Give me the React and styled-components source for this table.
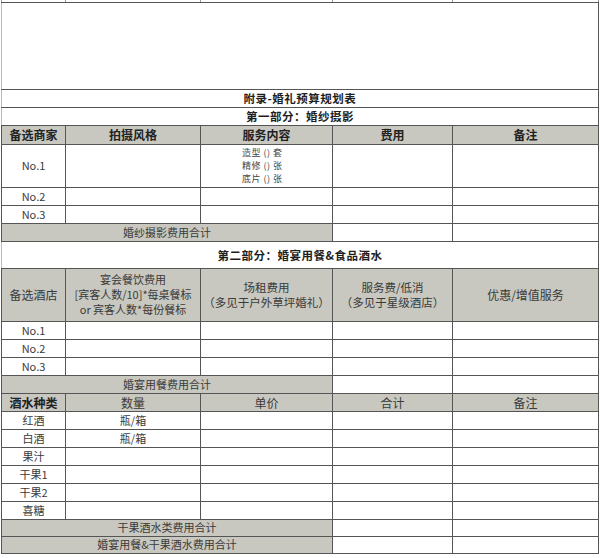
import styled, { createGlobalStyle } from "styled-components";

const GlobalStyle = createGlobalStyle`
  html, body {
    margin: 0;
    padding: 0;
    background: #fff;
  }
  body {
    font-family: "Noto Sans CJK SC", "Noto Sans", sans-serif;
    color: #333;
  }
`;

const Page = styled.div`
  width: 600px;
  height: 558px;
  overflow: hidden;
  background: #fff;
`;

const Sheet = styled.table`
  margin-left: 1px;
  width: 597px;
  border-collapse: collapse;
  table-layout: fixed;
  font-size: 11px;
`;

const Row = styled.tr`
  height: ${(p) => p.h}px;
`;

const Cell = styled.td`
  border: 1px solid #555;
  padding: 0;
  text-align: center;
  vertical-align: middle;
  line-height: 15px;
  background: ${(p) => (p.gray ? "#c8c8c0" : "#fff")};
  font-weight: ${(p) => (p.bold ? 700 : 400)};
  color: ${(p) => (p.bold ? "#222" : "#3a3a3a")};
  font-size: ${(p) => p.size || 11}px;
  white-space: nowrap;
`;

const Blank = styled.td`
  border-left: 1px solid #bbb;
  border-right: 1px solid #555;
  border-top: 1px solid #555;
  border-bottom: 1px solid #555;
  padding: 0;
`;

const Stub = styled.td`
  border-left: 1px solid #999;
  border-right: 1px solid #999;
  border-bottom: 1px solid #555;
  padding: 0;
`;

const Heading = styled.td`
  border: 1px solid #555;
  border-left-color: #bbb;
  padding: 0;
  text-align: center;
  font-weight: 700;
  font-size: 11.5px;
  color: #1e1e1e;
  letter-spacing: 0.5px;
`;

const ItemList = styled.div`
  display: flex;
  flex-direction: column;
  align-items: flex-start;
  padding-left: 41px;
  font-size: 9px;
  line-height: 13px;
  color: #444;
  letter-spacing: 0.5px;
`;

const cols = [64, 135, 132, 120, 146];

const photoRows = ["No.2", "No.3"];
const hotelRows = ["No.1", "No.2", "No.3"];
const drinks = [
  { name: "红酒", qty: "瓶/箱" },
  { name: "白酒", qty: "瓶/箱" },
  { name: "果汁", qty: "" },
  { name: "干果1", qty: "" },
  { name: "干果2", qty: "" },
  { name: "喜糖", qty: "" },
];

const TotalRow = ({ label, h = 18 }) => (
  <Row h={h}>
    <Cell gray colSpan={3}>{label}</Cell>
    <Cell />
    <Cell />
  </Row>
);

const App = () => {
  return (
    <Page>
      <GlobalStyle />
      <Sheet>
        <colgroup>
          {cols.map((w, i) => (
            <col key={i} style={{ width: w }} />
          ))}
        </colgroup>
        <tbody>
          <Row h={2}>
            {cols.map((_, i) => (
              <Stub key={i} />
            ))}
          </Row>
          <Row h={87}>
            <Blank colSpan={5} />
          </Row>
          <Row h={18}>
            <Heading colSpan={5}>附录-婚礼预算规划表</Heading>
          </Row>
          <Row h={18}>
            <Heading colSpan={5}>第一部分：婚纱摄影</Heading>
          </Row>
          <Row h={19}>
            <Cell gray bold size={12}>备选商家</Cell>
            <Cell gray bold size={12}>拍摄风格</Cell>
            <Cell gray bold size={12}>服务内容</Cell>
            <Cell gray bold size={12}>费用</Cell>
            <Cell gray bold size={12}>备注</Cell>
          </Row>
          <Row h={43}>
            <Cell>No.1</Cell>
            <Cell />
            <Cell>
              <ItemList>
                <span>造型 () 套</span>
                <span>精修 () 张</span>
                <span>底片 () 张</span>
              </ItemList>
            </Cell>
            <Cell />
            <Cell />
          </Row>
          {photoRows.map((r) => (
            <Row h={18} key={r}>
              <Cell>{r}</Cell>
              <Cell />
              <Cell />
              <Cell />
              <Cell />
            </Row>
          ))}
          <TotalRow label="婚纱摄影费用合计" />
          <Row h={27}>
            <Heading colSpan={5}>第二部分：婚宴用餐&amp;食品酒水</Heading>
          </Row>
          <Row h={53}>
            <Cell gray size={12}>备选酒店</Cell>
            <Cell gray size={11}>
              宴会餐饮费用
              <br />
              [宾客人数/10]*每桌餐标
              <br />
              or 宾客人数*每份餐标
            </Cell>
            <Cell gray size={11.5}>
              场租费用
              <br />
              （多见于户外草坪婚礼）
            </Cell>
            <Cell gray size={11.5}>
              服务费/低消
              <br />
              （多见于星级酒店）
            </Cell>
            <Cell gray size={12}>优惠/增值服务</Cell>
          </Row>
          {hotelRows.map((r) => (
            <Row h={18} key={r}>
              <Cell>{r}</Cell>
              <Cell />
              <Cell />
              <Cell />
              <Cell />
            </Row>
          ))}
          <TotalRow label="婚宴用餐费用合计" />
          <Row h={18}>
            <Cell gray bold size={12}>酒水种类</Cell>
            <Cell gray size={12}>数量</Cell>
            <Cell gray size={12}>单价</Cell>
            <Cell gray size={12}>合计</Cell>
            <Cell gray size={12}>备注</Cell>
          </Row>
          {drinks.map((d) => (
            <Row h={18} key={d.name}>
              <Cell>{d.name}</Cell>
              <Cell>{d.qty}</Cell>
              <Cell />
              <Cell />
              <Cell />
            </Row>
          ))}
          <TotalRow label="干果酒水类费用合计" h={17} />
          <TotalRow label="婚宴用餐&干果酒水费用合计" h={17} />
        </tbody>
      </Sheet>
    </Page>
  );
};

export default App;
